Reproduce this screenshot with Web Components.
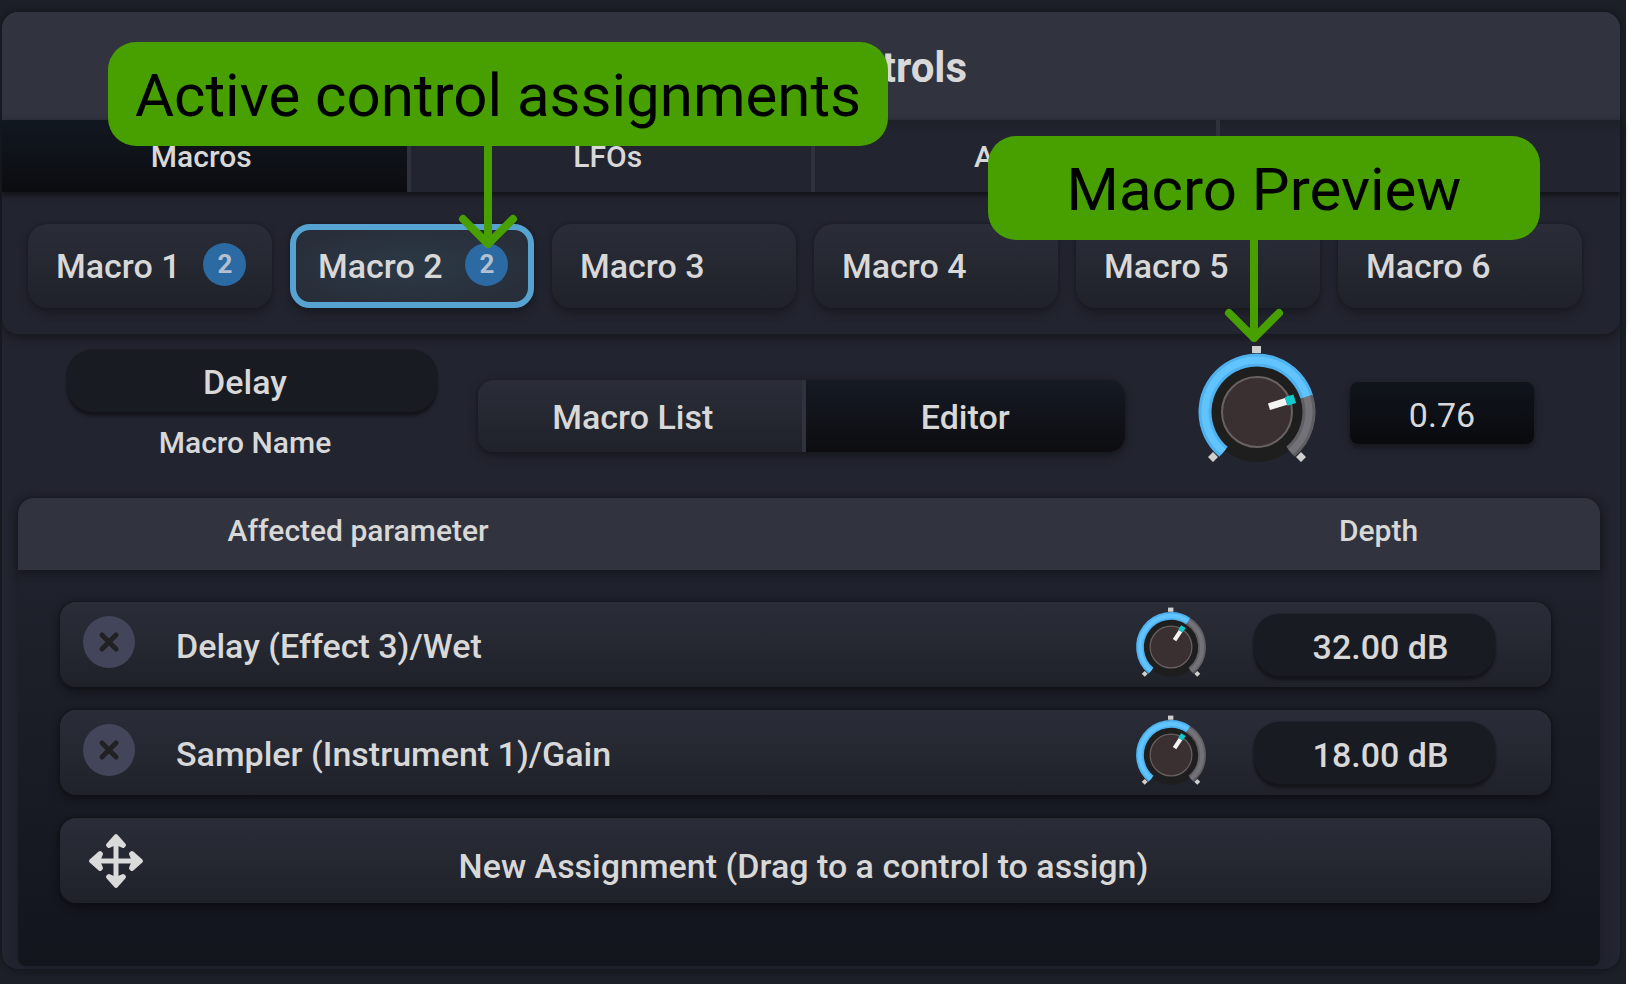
<!DOCTYPE html>
<html lang="en">
<head>
<meta charset="utf-8">
<title>Macro Controls</title>
<style>
    body
    {
        margin: 0;
        background: #fff;
        font-family: Roboto, "Liberation Sans", sans-serif;
        font-weight: 500;
        color: #d8d8d8;
    }
</style>
</head>
<body>
<control-panel></control-panel>

<script>
(function(){

//Parses the markup once, every instance clones it
function define(name, html, setup)
{
    const template = document.createElement('template');
    template.innerHTML = html;

    customElements.define(name, class extends HTMLElement {
        constructor()
        {
            super();

            this.attachShadow({mode: 'open'});
            this.shadowRoot.appendChild(template.content.cloneNode(true));
        }

        connectedCallback()
        {
            if(setup)
                setup(this, this.shadowRoot);
        }
    });
}

//Rotary knob, sweeps 280 degrees. "value" is 0..1
define('rotary-knob', `
<style>
    :host{
        display: grid;
        width: 134px;
        height: 134px;
    }

    :host([small]){
        width: 80px;
        height: 80px;
    }

    svg, input
    {
        grid-area: 1 / 1;
        width: 100%;
        height: 100%;
        margin: 0;
    }

    input
    {
        opacity: 0;
    }
</style>
<svg viewBox="-67 -67 134 134" aria-hidden="true">
    <circle r="50" fill="#1e1e1e"/>
    <g fill="none" stroke-width="13">
        <path class="track" stroke="#5f5f64"/>
        <path class="fill" stroke="#4fb2ee"/>
    </g>
    <g fill="none" stroke-width="7">
        <path class="track" stroke="#737278"/>
        <path class="fill" stroke="#61c4ff"/>
    </g>
    <circle r="35" fill="#3a3032" stroke="#696162" stroke-width="2"/>
    <g class="pointer">
        <rect x="-5" y="-31" width="7" height="18" fill="#f4f4f4"/>
        <rect x="-6" y="-40" width="9" height="9" fill="#12c9cf"/>
    </g>
    <g fill="#cfcfcf">
        <rect x="-5" y="-66" width="9" height="7"/>
        <path d="M-44 40l5 5l-5 5l-5-5zM44 40l5 5l-5 5l-5-5z"/>
    </g>
</svg>
<input type="range" min="0" max="1" step="0.01">`, (el, root) => {
    const input = root.querySelector('input');
    const point = deg => {
        const rad = deg * Math.PI / 180;
        return (52 * Math.sin(rad)).toFixed(2) + ' ' + (-52 * Math.cos(rad)).toFixed(2);
    };
    const arc = (from, to) => 'M' + point(from) + 'A52 52 0 ' + (to - from > 180 ? 1 : 0) + ' 1 ' + point(to);

    const draw = () => {
        const angle = -140 + 280 * input.value;
        for(const path of root.querySelectorAll('.track'))
            path.setAttribute('d', arc(angle, 140));
        for(const path of root.querySelectorAll('.fill'))
            path.setAttribute('d', arc(-140, angle));
        root.querySelector('.pointer').setAttribute('transform', 'rotate(' + angle + ')');
    };

    input.value = el.getAttribute('value');
    input.setAttribute('aria-label', el.getAttribute('label'));
    input.oninput = draw;
    draw();
});

//Text field, dark pill or the squarer "screen" look
define('value-field', `
<style>
    :host{
        display: block;
    }

    input
    {
        box-sizing: border-box;
        display: block;
        width: 100%;
        height: 62px;
        padding: 2px 14px 0 0;
        border: 0;
        border-radius: 26px;
        background: #191b22;
        box-shadow: 0 4px 3px #14151b, 0 0 2px #14151b;
        color: inherit;
        font: inherit;
        font-size: 34px;
        text-align: center;
    }

    :host([screen]) input{
        padding: 4px 0 0;
        border-radius: 8px;
        background: linear-gradient(#10151c, #090a0e);
        box-shadow: 0 3px 6px #14151b;
        font-weight: 400;
    }

    :host([unit]) input{
        padding: 4px 0 0 12px;
    }
</style>
<input type="text">`, (el, root) => {
    const input = root.querySelector('input');
    input.value = el.getAttribute('value');
    input.setAttribute('aria-label', el.getAttribute('label'));
});

define('tab-button', `
<style>
    :host{
        box-sizing: border-box;
        display: flex;
        flex: 0 0 25%;
        border-left: 4px solid #2f313c;
    }

    :host(:first-child){
        border-left: 0;
    }

    button
    {
        flex: 1;
        height: 72px;
        padding: 0 6px 0 0;
        border: 0;
        background: linear-gradient(#1d2029, #22242f 12px);
        color: inherit;
        font: inherit;
        font-size: 30px;
    }

    :host([active]) button{
        background: linear-gradient(#121821, #0b0c10);
    }
</style>
<button type="button" role="tab"><slot></slot></button>`, (el, root) => {
    root.querySelector('button').setAttribute('aria-selected', el.hasAttribute('active'));
    if(el.hasAttribute('label'))
        root.querySelector('button').setAttribute('aria-label', el.getAttribute('label'));
});

define('macro-button', `
<style>
    :host{
        display: flex;
        flex: 1 1 0;
    }

    button
    {
        box-sizing: border-box;
        flex: 1;
        display: flex;
        align-items: center;
        height: 84px;
        padding: 0 0 0 28px;
        border: 0;
        border-radius: 20px;
        background: linear-gradient(#2a2c38, #20222a);
        box-shadow: 0 5px 8px #191a22, 0 0 3px #1b1c24;
        color: inherit;
        font: inherit;
        font-size: 34px;
        white-space: nowrap;
    }

    :host([active]) button{
        padding-left: 22px;
        border: 6px solid #56a2d1;
        background: radial-gradient(#2b3945, #272c38);
    }

    .badge
    {
        width: 43px;
        height: 43px;
        margin: 0 0 4px 23px;
        border-radius: 50%;
        background: #2c6aa4;
        color: #b3c0cf;
        font-size: 26px;
        font-weight: 700;
        line-height: 42px;
        text-align: center;
    }
</style>
<button type="button"><slot></slot></button>`, (el, root) => {
    if(!el.hasAttribute('count'))
        return;

    const badge = document.createElement('span');
    badge.className = 'badge';
    badge.textContent = el.getAttribute('count');
    root.querySelector('button').appendChild(badge);
});

define('view-switch', `
<style>
    :host{
        display: flex;
        height: 72px;
        border-radius: 16px;
        overflow: hidden;
        box-shadow: 0 4px 8px #17181f, 0 0 3px #1b1c24;
    }

    button
    {
        box-sizing: border-box;
        flex: 0 0 50%;
        padding: 2px 14px 0 0;
        border: 0;
        background: linear-gradient(#2a2c38, #20222a);
        color: inherit;
        font: inherit;
        font-size: 34px;
    }

    button + button
    {
        padding-right: 0;
        border-left: 4px solid #30323d;
    }

    [aria-pressed=true]
    {
        background: linear-gradient(#151a23, #0d0d11);
    }
</style>
<button type="button" aria-pressed="false">Macro List</button>
<button type="button" aria-pressed="true">Editor</button>`);

define('remove-button', `
<style>
    :host{
        display: block;
    }

    button
    {
        display: block;
        width: 52px;
        height: 52px;
        padding: 0;
        border: 0;
        border-radius: 50%;
        background: #43465a;
    }

    svg
    {
        display: block;
    }
</style>
<button type="button" aria-label="Remove assignment">
    <svg width="52" height="52" viewBox="0 0 52 52" fill="none" stroke="#212124" stroke-width="5" stroke-linecap="round"><path d="M19 19l14 14M33 19l-14 14"/></svg>
</button>`);

define('assignment-table', `
<style>
    :host{
        display: block;
        border-radius: 16px 16px 8px 8px;
        background: linear-gradient(#1f212c 72px, #1b1e27 200px, #12151c);
        box-shadow: 0 0 8px #1a1c24;
    }

    table, thead, tbody, tfoot, tfoot tr
    {
        display: block;
    }

    th, td
    {
        display: block;
        padding: 0;
    }

    thead tr
    {
        display: flex;
        justify-content: space-between;
        border-radius: 16px 16px 0 0;
        background: #31343f;
        box-shadow: 0 3px 8px #14161c;
    }

    th
    {
        flex: 0 0 43%;
        padding-bottom: 6px;
        font-size: 30px;
        font-weight: 500;
        line-height: 66px;
    }

    th:last-child
    {
        flex-basis: 28%;
    }

    tbody, tfoot
    {
        padding: 0 49px 0 42px;
    }

    tbody
    {
        padding-top: 32px;
    }

    tfoot
    {
        padding-bottom: 63px;
    }

    tbody tr
    {
        display: flex;
        align-items: center;
        box-sizing: border-box;
        height: 85px;
        margin-bottom: 23px;
        padding: 0 56px 0 23px;
        border-radius: 16px;
        background: linear-gradient(#2a2c38, #20222a);
        box-shadow: 0 4px 8px #101116, 0 0 3px #101116;
    }

    .remove
    {
        width: 93px;
        padding-bottom: 5px;
    }

    .name
    {
        flex: 1;
        font-size: 34px;
        line-height: 40px;
        padding-top: 3px;
    }

    .knob
    {
        padding-top: 4px;
    }

    .value
    {
        flex: 0 0 241px;
        margin-left: 43px;
    }

    tfoot button
    {
        box-sizing: border-box;
        display: flex;
        align-items: center;
        width: 100%;
        height: 85px;
        padding: 0 28px;
        border: 0;
        border-radius: 16px;
        background: linear-gradient(#2a2c38, #20222a);
        box-shadow: 0 4px 8px #0d0e13, 0 0 3px #101116;
        color: inherit;
        font: inherit;
        font-size: 34px;
    }

    tfoot span
    {
        flex: 1;
        padding: 10px 60px 0 0;
    }
</style>
<table cellspacing="0">
    <thead>
        <tr><th colspan="2">Affected parameter</th><th colspan="2">Depth</th></tr>
    </thead>
    <tbody>
        <tr>
            <td class="remove"><remove-button></remove-button></td>
            <td class="name">Delay (Effect 3)/Wet</td>
            <td class="knob"><rotary-knob small value="0.62" label="Wet depth"></rotary-knob></td>
            <td class="value"><value-field unit value="32.00 dB" label="Wet depth value"></value-field></td>
        </tr>
        <tr>
            <td class="remove"><remove-button></remove-button></td>
            <td class="name">Sampler (Instrument 1)/Gain</td>
            <td class="knob"><rotary-knob small value="0.62" label="Gain depth"></rotary-knob></td>
            <td class="value"><value-field unit value="18.00 dB" label="Gain depth value"></value-field></td>
        </tr>
    </tbody>
    <tfoot>
        <tr><td colspan="4">
            <button type="button">
                <svg width="56" height="56" viewBox="-28 -28 56 56" fill="#dadada" stroke="#dadada" stroke-width="4" stroke-linecap="round" stroke-linejoin="round">
                    <path d="M0-22V22M-22 0H22" stroke-width="5"/>
                    <path d="M0-25L8-16L7-15L0-18L-7-15L-8-16ZM0 25L8 16L7 15L0 18L-7 15L-8 16ZM-25 0L-16-8L-15-7L-18 0L-15 7L-16 8ZM25 0L16-8L15-7L18 0L15 7L16 8Z"/>
                </svg>
                <span>New Assignment (Drag to a control to assign)</span>
            </button>
        </td></tr>
    </tfoot>
</table>`);

//Green note with an arrow that points down at a control
define('callout-note', `
<style>
    :host{
        position: absolute;
        display: block;
        box-sizing: border-box;
        height: 104px;
        border-radius: 28px;
        background: #48a000;
        color: #000;
        font-size: 60px;
        font-weight: 400;
        line-height: 108px;
        text-align: center;
        white-space: nowrap;
    }

    svg
    {
        position: absolute;
        top: 100%;
        left: var(--arrow);
        overflow: visible;
    }
</style>
<slot></slot>
<svg width="1" height="102" fill="none" stroke="#48a000" stroke-width="8" stroke-linecap="round" stroke-linejoin="round" aria-hidden="true"><path d="M0-4V98M-25 73L0 98L25 73"/></svg>`);

define('control-panel', `
<style>
    :host{
        position: relative;
        display: block;
        box-sizing: border-box;
        min-height: 100vh;
        margin-right: 14px;
        padding: 12px 6px 15px 2px;
        background: #1c1f27;
    }

    .panel
    {
        padding-bottom: 3px;
        border-radius: 16px;
        background: #22242f;
        box-shadow: 0 0 6px #111318;
    }

    header
    {
        border-radius: 16px 16px 0 0;
        background: #31343f;
    }

    h1
    {
        margin: 0;
        padding: 4px 0 0 22px;
        font-size: 42px;
        font-weight: 700;
        line-height: 104px;
        text-align: center;
    }

    .tabs
    {
        display: flex;
        box-shadow: 0 4px 4px #14151a;
    }

    .bank
    {
        border-radius: 0 0 16px 16px;
        box-shadow: 0 4px 8px #17181f;
    }

    .macros
    {
        display: flex;
        gap: 18px;
        padding: 32px 38px 26px 26px;
    }

    .editor
    {
        display: grid;
        grid-template-columns: 370fr 662fr auto 184fr;
        column-gap: 26px;
        align-items: center;
        min-height: 164px;
        padding: 0 86px 0 65px;
    }

    .name
    {
        align-self: start;
        padding-top: 16px;
        text-align: center;
    }

    .name span
    {
        display: block;
        padding: 13px 14px 0 0;
        font-size: 30px;
        line-height: 36px;
    }

    view-switch
    {
        margin-left: 15px;
    }

    .editor rotary-knob
    {
        margin: 0 0 8px 39px;
    }

    .editor > value-field
    {
        margin-bottom: 6px;
    }

    assignment-table
    {
        margin: 0 20px 0 16px;
    }

    .assignments
    {
        --arrow: 380px;
        top: 42px;
        left: 108px;
        width: 780px;
    }

    .preview
    {
        --arrow: 266px;
        top: 136px;
        left: 988px;
        width: 552px;
    }
</style>
<div class="panel">
    <header><h1>Macro Controls</h1></header>
    <div class="bank">
        <div class="tabs" role="tablist">
            <tab-button active>Macros</tab-button>
            <tab-button>LFOs</tab-button>
            <tab-button>ADSR</tab-button>
            <tab-button label="More"></tab-button>
        </div>
        <div class="macros">
            <macro-button count="2">Macro 1</macro-button>
            <macro-button count="2" active>Macro 2</macro-button>
            <macro-button>Macro 3</macro-button>
            <macro-button>Macro 4</macro-button>
            <macro-button>Macro 5</macro-button>
            <macro-button>Macro 6</macro-button>
        </div>
    </div>
    <div class="editor">
        <div class="name">
            <value-field value="Delay" label="Macro Name"></value-field>
            <span>Macro Name</span>
        </div>
        <view-switch></view-switch>
        <rotary-knob value="0.76" label="Macro value"></rotary-knob>
        <value-field screen value="0.76" label="Macro value"></value-field>
    </div>
    <assignment-table></assignment-table>
</div>
<callout-note class="assignments">Active control assignments</callout-note>
<callout-note class="preview">Macro Preview</callout-note>`);

})();
</script>
</body>
</html>
